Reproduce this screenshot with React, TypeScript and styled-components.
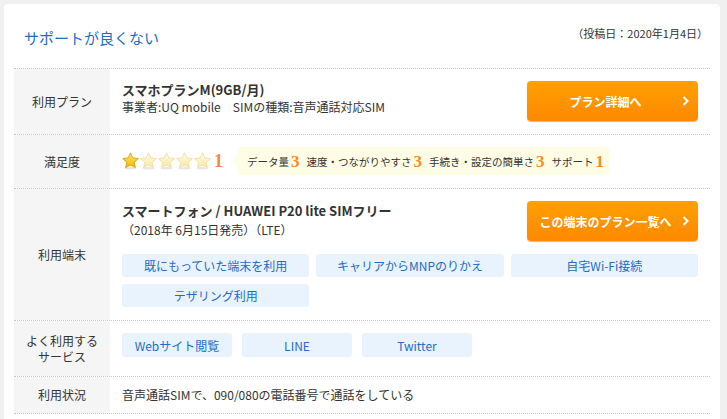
import React from "react";
import styled, { createGlobalStyle } from "styled-components";

const Global = createGlobalStyle`
  html, body { margin: 0; padding: 0; background: #f0f0f0; }
  body { font-family: "Noto Sans CJK JP", "Noto Sans", sans-serif; color: #333; }
  * { box-sizing: border-box; }
`;

const Card = styled.div`
  margin: 4px 7px 0 4px;
  background: #fff;
  border-radius: 4px 4px 0 0;
  padding: 0 10px 10px;
  min-height: 420px;
`;

const Header = styled.div`
  display: flex;
  justify-content: space-between;
  align-items: flex-start;
  height: 64px;
  padding: 0 2px 0 10px;
`;

const Heading = styled.h2`
  margin: 24px 0 0;
  font-size: 15px;
  line-height: 20px;
  font-weight: normal;
  color: #1d6cc6;
`;

const PostDate = styled.div`
  margin-top: 21px;
  font-size: 11px;
  line-height: 16px;
  color: #333;
`;

const Table = styled.div`
  border-bottom: 1px dotted #c8c8c8;
`;

const Row = styled.div`
  display: grid;
  grid-template-columns: 96px 1fr;
  border-top: 1px dotted #c8c8c8;
`;

const Label = styled.div`
  background: #f5f5f5;
  display: flex;
  align-items: center;
  justify-content: center;
  text-align: center;
  font-size: 12px;
  line-height: 16px;
  color: #333;
`;

const Cell = styled.div<{ $pad: string }>`
  padding: ${(p) => p.$pad};
  min-width: 0;
`;

const SplitRow = styled.div`
  display: flex;
  justify-content: space-between;
  align-items: flex-start;
`;

const TextBlock = styled.div`
  display: flex;
  flex-direction: column;
`;

const Title = styled.div<{ $lh: number }>`
  font-size: 13px;
  line-height: ${(p) => p.$lh}px;
  font-weight: bold;
  color: #333;
`;

const Sub = styled.div`
  font-size: 12px;
  line-height: 18px;
  color: #333;
`;

const Button = styled.a`
  position: relative;
  flex: none;
  width: 171px;
  height: 40px;
  display: flex;
  align-items: center;
  justify-content: center;
  padding: 0 22px 0 8px;
  border-radius: 4px;
  background: linear-gradient(#ffa000, #ff8800);
  box-shadow: 0 1px 1px rgba(150, 100, 40, 0.45);
  color: #fff;
  font-size: 12px;
  font-weight: bold;
  text-decoration: none;
  white-space: nowrap;
`;

const Chevron = styled.svg`
  position: absolute;
  right: 9px;
  top: 15px;
`;

const RatingLine = styled.div`
  display: flex;
  align-items: center;
  height: 28px;
`;

const Stars = styled.div`
  display: flex;
  gap: 1px;
`;

const Score = styled.span<{ $size: number; $tone: string }>`
  font-family: "Liberation Serif", serif;
  font-weight: bold;
  font-size: ${(p) => p.$size}px;
  line-height: 1;
  color: ${(p) => p.$tone};
`;

const StarScore = styled(Score)`
  margin-left: 3px;
`;

const Bubble = styled.div`
  position: relative;
  margin-left: 14px;
  height: 28px;
  display: flex;
  align-items: center;
  gap: 7px;
  padding: 0 6px 0 10px;
  background: #fffde6;
  border-radius: 4px;
  &::before {
    content: "";
    position: absolute;
    left: -5px;
    top: 9px;
    border-style: solid;
    border-width: 5px 5px 5px 0;
    border-color: transparent #fffde6 transparent transparent;
  }
`;

const Item = styled.span`
  display: flex;
  align-items: center;
  gap: 2px;
  font-size: 10.5px;
  color: #333;
  white-space: nowrap;
`;

const TagGrid = styled.div`
  margin-top: 13px;
  display: grid;
  grid-template-columns: repeat(3, 1fr);
  gap: 7px;
`;

const TagRow = styled.div`
  display: flex;
  gap: 10px;
`;

const Tag = styled.div<{ $w?: number; $h: number }>`
  ${(p) => (p.$w ? `width: ${p.$w}px;` : "")}
  height: ${(p) => p.$h}px;
  display: flex;
  align-items: center;
  justify-content: center;
  background: #e8f3fd;
  border-radius: 3px;
  color: #1d6cc6;
  font-size: 12px;
  white-space: nowrap;
`;

const Plain = styled.div`
  font-size: 12px;
  line-height: 18px;
  color: #333;
`;

const STAR =
  "M8.5 0.9 L10.85 5.9 L16.3 6.55 L12.3 10.3 L13.35 15.6 L8.5 13.0 L3.65 15.6 L4.7 10.3 L0.7 6.55 L6.15 5.9 Z";

function Star({ on, id }: { on: boolean; id: string }) {
  return (
    <svg width="17" height="18" viewBox="0 0 17 18">
      <defs>
        <linearGradient id={id} x1="0" y1="0" x2="0" y2="1">
          {on ? (
            <>
              <stop offset="0" stopColor="#ffe680" />
              <stop offset="1" stopColor="#f2b600" />
            </>
          ) : (
            <>
              <stop offset="0" stopColor="#fffcea" />
              <stop offset="1" stopColor="#fbe7a2" />
            </>
          )}
        </linearGradient>
      </defs>
      <ellipse cx="8.5" cy="16.3" rx="6" ry="1.2" fill="#e6e6e6" />
      <path
        d={STAR}
        fill={`url(#${id})`}
        stroke={on ? "#d9a000" : "#efdca0"}
        strokeWidth="0.9"
        strokeLinejoin="round"
      />
    </svg>
  );
}

function Arrow() {
  return (
    <Chevron width="7" height="10" viewBox="0 0 7 10">
      <path d="M1.5 1 L5.5 5 L1.5 9" fill="none" stroke="#fff" strokeWidth="2" />
    </Chevron>
  );
}

const ratings = [
  { label: "データ量", v: "3" },
  { label: "速度・つながりやすさ", v: "3" },
  { label: "手続き・設定の簡単さ", v: "3" },
  { label: "サポート", v: "1" },
];

const usage = ["既にもっていた端末を利用", "キャリアからMNPのりかえ", "自宅Wi-Fi接続", "テザリング利用"];
const services = ["Webサイト閲覧", "LINE", "Twitter"];

export default function App() {
  return (
    <>
      <Global />
      <Card>
        <Header>
          <Heading>サポートが良くない</Heading>
          <PostDate>（投稿日：2020年1月4日）</PostDate>
        </Header>
        <Table>
          <Row>
            <Label>利用プラン</Label>
            <Cell $pad="12px 12px 13px">
              <SplitRow>
                <TextBlock>
                  <Title $lh={17}>スマホプランM(9GB/月)</Title>
                  <Sub>事業者:UQ mobile　SIMの種類:音声通話対応SIM</Sub>
                </TextBlock>
                <Button href="#">
                  プラン詳細へ
                  <Arrow />
                </Button>
              </SplitRow>
            </Cell>
          </Row>
          <Row>
            <Label>満足度</Label>
            <Cell $pad="12px 12px 13px">
              <RatingLine>
                <Stars>
                  {[0, 1, 2, 3, 4].map((i) => (
                    <Star key={i} on={i === 0} id={`sg${i}`} />
                  ))}
                </Stars>
                <StarScore $size={18} $tone="#ff8246">1</StarScore>
                <Bubble>
                  {ratings.map((r) => (
                    <Item key={r.label}>
                      {r.label}
                      <Score $size={17} $tone="#ff8a1c">{r.v}</Score>
                    </Item>
                  ))}
                </Bubble>
              </RatingLine>
            </Cell>
          </Row>
          <Row>
            <Label>利用端末</Label>
            <Cell $pad="12px 12px 13px">
              <SplitRow>
                <TextBlock>
                  <Title $lh={20}>スマートフォン / HUAWEI P20 lite SIMフリー</Title>
                  <Sub>（2018年 6月15日発売）（LTE）</Sub>
                </TextBlock>
                <Button href="#">
                  この端末のプラン一覧へ
                  <Arrow />
                </Button>
              </SplitRow>
              <TagGrid>
                {usage.map((u) => (
                  <Tag key={u} $h={23}>
                    {u}
                  </Tag>
                ))}
              </TagGrid>
            </Cell>
          </Row>
          <Row>
            <Label>
              よく利用する
              <br />
              サービス
            </Label>
            <Cell $pad="12px 12px 19px">
              <TagRow>
                {services.map((s) => (
                  <Tag key={s} $w={110} $h={24}>
                    {s}
                  </Tag>
                ))}
              </TagRow>
            </Cell>
          </Row>
          <Row>
            <Label>利用状況</Label>
            <Cell $pad="9px 12px 9px">
              <Plain>音声通話SIMで、090/080の電話番号で通話をしている</Plain>
            </Cell>
          </Row>
        </Table>
      </Card>
    </>
  );
}
